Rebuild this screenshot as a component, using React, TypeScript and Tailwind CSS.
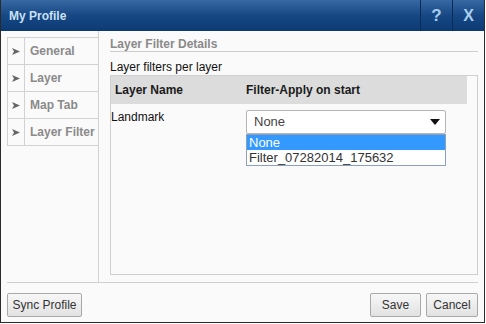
import { useState } from "react";

const navItems = ["General", "Layer", "Map Tab", "Layer Filter"];

function Arrow() {
  return (
    <svg width="8" height="7" viewBox="0 0 8 7" className="block">
      <path d="M0 0 L8 3.5 L0 7 L2 3.5 Z" fill="#666" />
    </svg>
  );
}

function Btn({ label, w }: { label: string; w: string }) {
  return (
    <button
      type="button"
      className={`${w} h-[24px] rounded-[2px] border border-[#a9a9a9] bg-gradient-to-b from-[#f7f7f7] to-[#e2e2e2] text-[12px] text-[#333]`}
    >
      {label}
    </button>
  );
}

export default function App() {
  const [selected] = useState("None");

  return (
    <div className="w-[486px] h-[324px] bg-white font-['Liberation_Sans',Arial,sans-serif]">
      <div className="flex h-[323px] w-[485px] flex-col border-x border-b border-[#2b2b2b]">
        {/* title bar */}
        <div className="flex h-[31px] items-stretch bg-gradient-to-b from-[#3768a2] via-[#174884] to-[#0c3a74]">
          <div className="flex flex-1 items-center pl-[8px] text-[12px] font-bold text-[#c9e0f5]">
            My Profile
          </div>
          <div className="flex w-[32px] items-center justify-center border-l border-[#0a2b57] text-[17px] font-bold text-[#a9cdec]">
            ?
          </div>
          <div className="flex w-[32px] items-center justify-center border-l border-[#0a2b57] text-[16px] font-bold text-[#a9cdec]">
            X
          </div>
        </div>

        {/* body */}
        <div className="flex flex-1 flex-col bg-[#fafafa] px-[6px]">
          <div className="flex h-[252px] border-b border-[#cfcfcf]">
            {/* nav */}
            <div className="w-[92px] border-r border-[#d2d2d2] pt-[6px]">
              <div className="border-l border-t border-[#d2d2d2]">
                {navItems.map((item) => (
                  <div key={item} className="flex h-[27px] border-b border-[#d2d2d2]">
                    <div className="flex w-[17px] items-center justify-center border-r border-[#d2d2d2]">
                      <Arrow />
                    </div>
                    <div className="flex items-center whitespace-nowrap pl-[5px] text-[12px] font-bold text-[#8a8a8a]">
                      {item}
                    </div>
                  </div>
                ))}
              </div>
            </div>

            {/* content */}
            <div className="flex flex-1 flex-col pl-[11px]">
              <div className="mt-[7px] h-[14px] border-b border-[#cdcdcd] text-[12px] font-bold leading-[12px] text-[#8a8a8a]">
                Layer Filter Details
              </div>
              <div className="mt-[7px] h-[16px] text-[12px] leading-[16px] text-[#111]">
                Layer filters per layer
              </div>
              <div className="mb-[7px] flex-1 border border-[#cfcfcf] bg-[#fafafa] pr-[10px]">
                <div className="grid h-[28px] grid-cols-[135px_1fr] items-center bg-[#dcdcdc] text-[12px] font-bold text-[#1a1a1a]">
                  <div className="pl-[4px]">Layer Name</div>
                  <div>Filter-Apply on start</div>
                </div>
                <div className="grid grid-cols-[135px_1fr] pt-[6px]">
                  <div className="text-[12px] leading-[14px] text-[#111]">Landmark</div>
                  <div className="relative">
                    <div className="flex h-[24px] w-[200px] items-center justify-between rounded-[2px] border border-[#b5b5b5] bg-white pl-[7px] pr-[5px] text-[13px] text-[#444]">
                      <span>{selected}</span>
                      <svg width="10" height="6" viewBox="0 0 10 6">
                        <path d="M0 0 H10 L5 6 Z" fill="#111" />
                      </svg>
                    </div>
                    <div className="absolute left-0 top-[24px] w-[200px] border border-[#8aa0bd] bg-white text-[13px] leading-[15px]">
                      <div className="bg-[#3399ff] pl-[2px] text-white">None</div>
                      <div className="pl-[2px] text-[#333]">Filter_07282014_175632</div>
                    </div>
                  </div>
                </div>
              </div>
            </div>
          </div>

          {/* footer */}
          <div className="flex items-center justify-between pt-[10px]">
            <Btn label="Sync Profile" w="w-[75px]" />
            <div className="flex gap-[5px]">
              <Btn label="Save" w="w-[51px]" />
              <Btn label="Cancel" w="w-[52px]" />
            </div>
          </div>
        </div>
      </div>
    </div>
  );
}
